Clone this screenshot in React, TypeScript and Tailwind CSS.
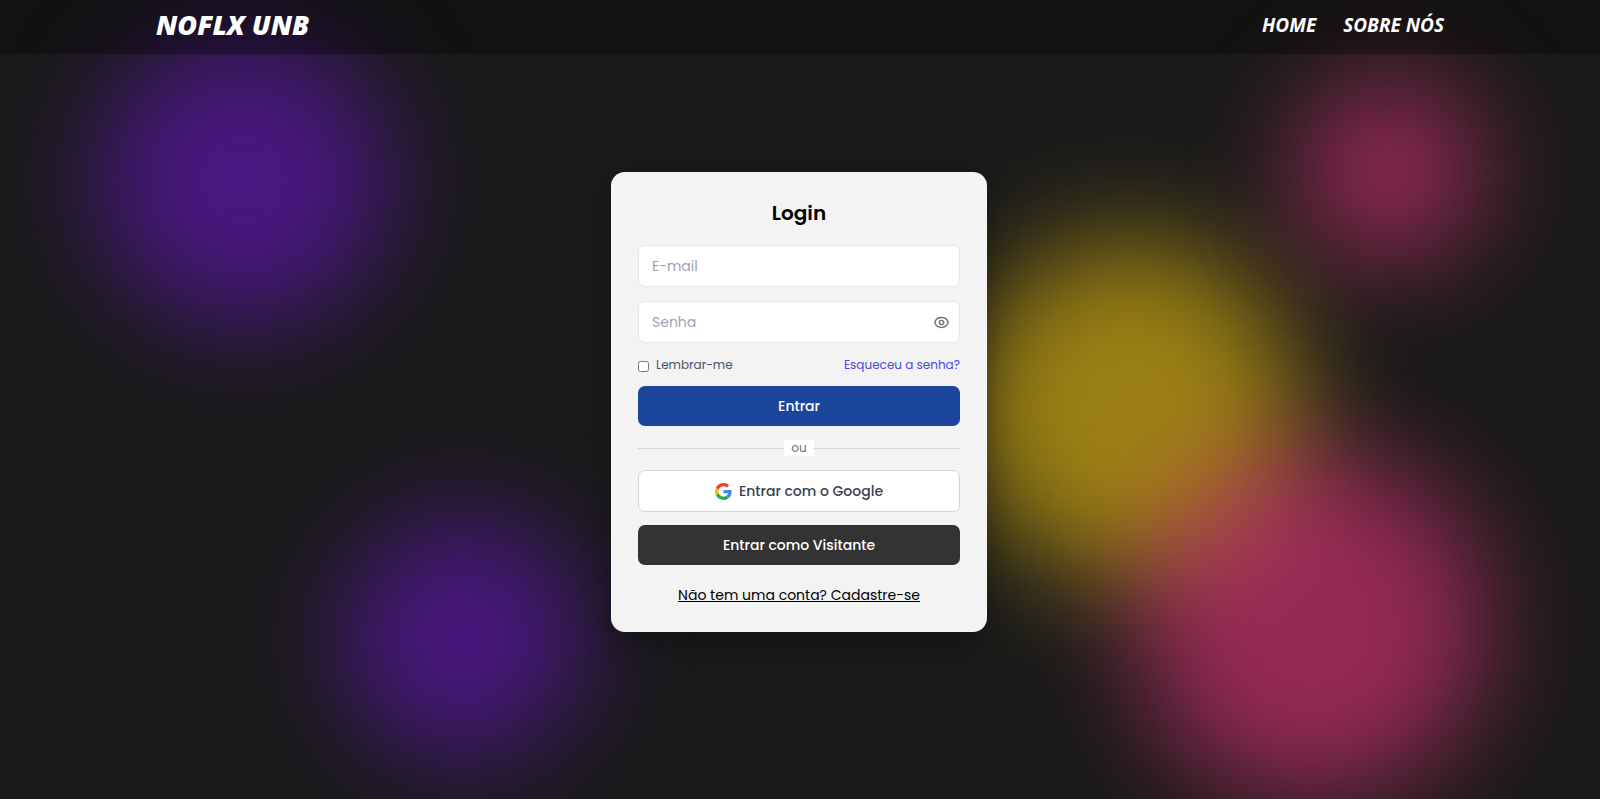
import { useState } from "react";

function Backdrop() {
  return (
    <div aria-hidden="true" className="pointer-events-none absolute inset-0 overflow-hidden">
      <div className="absolute left-[98px] top-[35px] size-[290px] rounded-full bg-[#6815c4] opacity-60 blur-[55px]" />
      <div className="absolute left-[342px] top-[518px] size-[240px] rounded-full bg-[#6815c4] opacity-60 blur-[55px]" />
      <div className="absolute left-[960px] top-[240px] size-[340px] rounded-full bg-[#f1c40f] opacity-60 blur-[55px]" />
      <div className="absolute left-[1136px] top-[450px] size-[350px] rounded-full bg-[#e6347c] opacity-60 blur-[55px]" />
      <div className="absolute left-[1296px] top-[79px] size-[184px] rounded-full bg-[#e6347c] opacity-60 blur-[55px]" />
    </div>
  );
}

function EyeIcon() {
  return (
    <svg viewBox="0 0 24 24" className="size-[17px]" fill="none" stroke="currentColor" strokeWidth="2" strokeLinecap="round" strokeLinejoin="round" aria-hidden="true">
      <path d="M15 12a3 3 0 11-6 0 3 3 0 016 0z" />
      <path d="M2.458 12C3.732 7.943 7.523 5 12 5c4.478 0 8.268 2.943 9.542 7-1.274 4.057-5.064 7-9.542 7-4.477 0-8.268-2.943-9.542-7z" />
    </svg>
  );
}

function GoogleIcon() {
  return (
    <svg viewBox="0 0 48 48" className="size-[17px]" aria-hidden="true">
      <path fill="#EA4335" d="M24 9.5c3.54 0 6.71 1.22 9.21 3.6l6.85-6.85C35.9 2.38 30.47 0 24 0 14.62 0 6.51 5.38 2.56 13.22l7.98 6.19C12.43 13.72 17.74 9.5 24 9.5z" />
      <path fill="#4285F4" d="M46.98 24.55c0-1.57-.15-3.09-.38-4.55H24v9.02h12.94c-.58 2.96-2.26 5.48-4.78 7.18l7.73 6c4.51-4.18 7.09-10.36 7.09-17.65z" />
      <path fill="#FBBC05" d="M10.53 28.59c-.48-1.45-.76-2.99-.76-4.59s.27-3.14.76-4.59l-7.98-6.19C.92 16.46 0 20.12 0 24c0 3.88.92 7.54 2.56 10.78l7.97-6.19z" />
      <path fill="#34A853" d="M24 48c6.48 0 11.93-2.13 15.89-5.81l-7.73-6c-2.15 1.45-4.92 2.3-8.16 2.3-6.26 0-11.57-4.22-13.47-9.91l-7.98 6.19C6.51 42.62 14.62 48 24 48z" />
    </svg>
  );
}

const field =
  "h-[42px] w-full rounded-[7px] border border-gray-200 bg-white px-[13px] text-[14px] text-gray-800 placeholder:text-[#9ca3af] outline-none focus:border-indigo-500";

export default function App() {
  const [visible, setVisible] = useState(false);

  return (
    <div className="relative min-h-screen overflow-hidden bg-[#1a1a1a] font-[Poppins,Inter,sans-serif]">
      <Backdrop />
      <header className="absolute inset-x-0 top-0 z-10 bg-black/30 font-['Permanent_Marker','Open_Sans',sans-serif] italic text-white">
        <div className="mx-auto flex h-[54px] max-w-[1288px] items-center justify-between pb-1">
          <a href="#" className="text-[27px] font-extrabold">NOFLX UNB</a>
          <nav className="flex gap-[27px] text-[19px] font-bold">
            <a href="#">HOME</a>
            <a href="#sobre">SOBRE NÓS</a>
          </nav>
        </div>
      </header>

      <main className="relative flex min-h-screen items-center justify-center pr-0.5 pt-[5px]">
        <form
          onSubmit={(e) => e.preventDefault()}
          className="w-[376px] rounded-[14px] border border-white/20 bg-[#f3f3f3] p-[26px] shadow-[0_10px_30px_rgba(0,0,0,0.3)]"
        >
          <h1 className="mb-[18px] text-center text-[20px] font-semibold leading-[28px] text-black">Login</h1>

          <input type="email" aria-label="E-mail" placeholder="E-mail" className={field} />
          <div className="relative mt-[14px]">
            <input type={visible ? "text" : "password"} aria-label="Senha" placeholder="Senha" className={field} />
            <button
              type="button"
              aria-label="Mostrar senha"
              onClick={() => setVisible(!visible)}
              className="absolute inset-y-0 right-[10px] flex items-center text-[#6b7280]"
            >
              <EyeIcon />
            </button>
          </div>

          <div className="my-[11px] flex items-center justify-between text-[12px] leading-[21px]">
            <label className="flex items-center gap-[7px] text-[#4b5563]">
              <input type="checkbox" className="mt-1 size-[11px]" />
              Lembrar-me
            </label>
            <a href="#senha" className="text-[#4f46e5]">Esqueceu a senha?</a>
          </div>

          <button type="submit" className="h-[40px] w-full rounded-[7px] bg-[#1c469c] text-[14px] font-medium text-white">
            Entrar
          </button>

          <div className="my-[14px] flex items-center">
            <span className="h-px flex-1 bg-[#d1d5db]" />
            <span className="bg-white px-[7px] text-[12px] leading-[16px] text-[#6b7280]">ou</span>
            <span className="h-px flex-1 bg-[#d1d5db]" />
          </div>

          <button type="button" className="flex h-[42px] w-full items-center justify-center gap-[7px] rounded-[7px] border border-[#d1d5db] bg-white text-[14px] font-medium text-[#374151]">
            <GoogleIcon />
            Entrar com o Google
          </button>
          <button type="button" className="mt-[13px] h-[40px] w-full rounded-[7px] bg-[#333333] text-[14px] font-medium text-white">
            Entrar como Visitante
          </button>

          <p className="mt-[20px] text-center text-[14px] leading-[20px] text-black">
            <a href="#cadastro" className="underline">Não tem uma conta? Cadastre-se</a>
          </p>
        </form>
      </main>
    </div>
  );
}
